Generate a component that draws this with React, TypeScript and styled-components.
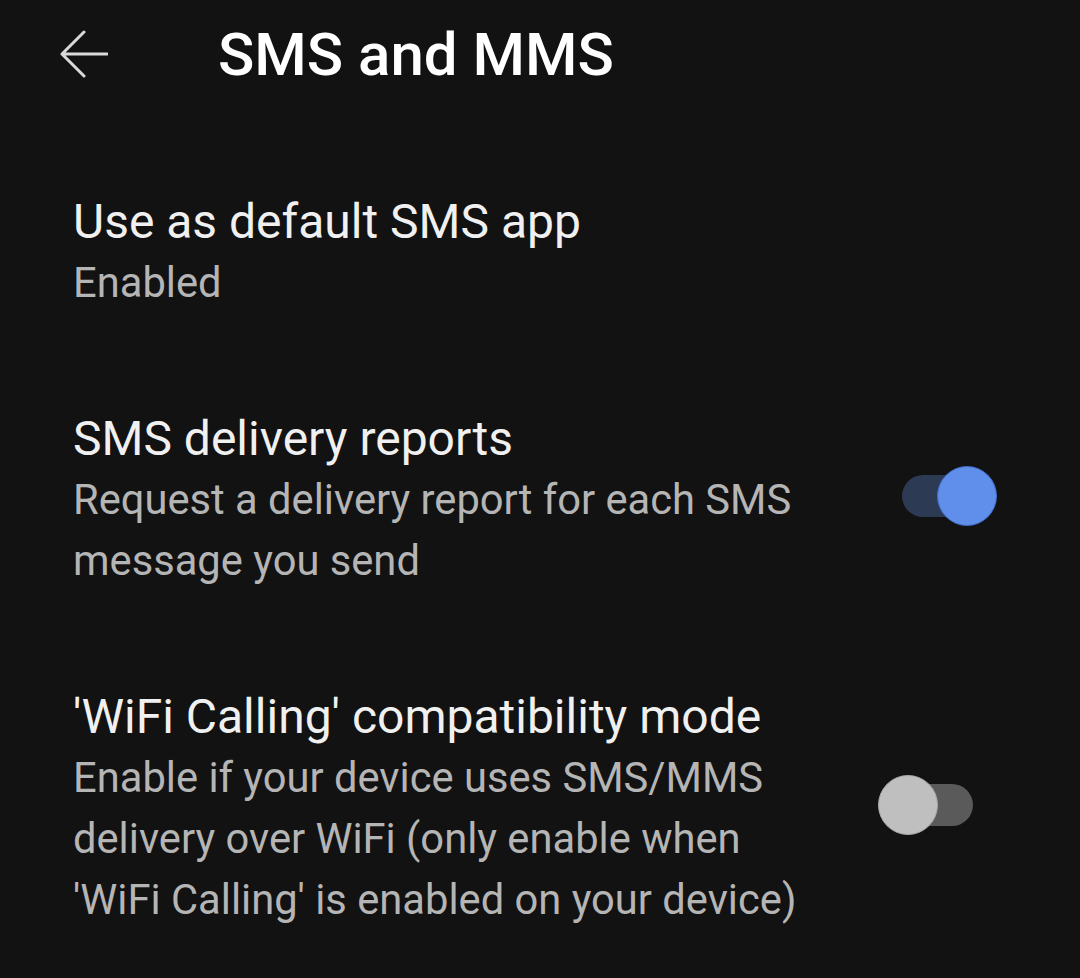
import styled, { createGlobalStyle } from "styled-components";

const GlobalStyle = createGlobalStyle`
  html, body {
    margin: 0;
    padding: 0;
    background: #121212;
  }
  body {
    font-family: Roboto, "Liberation Sans", sans-serif;
    -webkit-font-smoothing: antialiased;
  }
`;

interface Setting {
  title: string;
  summary: string;
  toggle?: boolean;
}

const settings: Setting[] = [
  { title: "Use as default SMS app", summary: "Enabled" },
  {
    title: "SMS delivery reports",
    summary: "Request a delivery report for each SMS message you send",
    toggle: true,
  },
  {
    title: "'WiFi Calling' compatibility mode",
    summary:
      "Enable if your device uses SMS/MMS delivery over WiFi (only enable when 'WiFi Calling' is enabled on your device)",
    toggle: false,
  },
];

const BackArrow = () => (
  <svg width="50" height="50" viewBox="0 0 50 50" fill="none">
    <path
      d="M49 25H4M26 3L4 25L26 47"
      stroke="#d9d9d9"
      strokeWidth="3"
      strokeLinecap="round"
      strokeLinejoin="round"
    />
  </svg>
);

const App = () => {
  return (
    <>
      <GlobalStyle />
      <Screen>
        <Toolbar>
          <BackButton aria-label="Back">
            <BackArrow />
          </BackButton>
          <Title>SMS and MMS</Title>
        </Toolbar>
        <List>
          {settings.map((s) => (
            <Row key={s.title}>
              <Text>
                <ItemTitle>{s.title}</ItemTitle>
                <Summary>{s.summary}</Summary>
              </Text>
              {s.toggle !== undefined && (
                <Switch $on={s.toggle}>
                  <Track $on={s.toggle} />
                  <Thumb $on={s.toggle} />
                </Switch>
              )}
            </Row>
          ))}
        </List>
      </Screen>
    </>
  );
};

export default App;

const Screen = styled.div`
  width: 1080px;
  min-height: 978px;
  background: #121212;
  color: #f2f2f2;
`;

const Toolbar = styled.header`
  height: 110px;
  display: flex;
  align-items: center;
  padding-left: 58px;
`;

const BackButton = styled.div`
  width: 50px;
  height: 50px;
  display: flex;
  align-items: center;
  justify-content: center;
  margin-top: -2px;
`;

const Title = styled.h1`
  margin: 0 0 0 110px;
  font-size: 60px;
  font-weight: 500;
  color: #ffffff;
  line-height: 1;
`;

const List = styled.div`
  padding-top: 34px;
`;

const Row = styled.div`
  display: flex;
  align-items: center;
  padding: 48px 82px 48px 73px;
  gap: 40px;
`;

const Text = styled.div`
  flex: 1;
  display: flex;
  flex-direction: column;
`;

const ItemTitle = styled.div`
  font-size: 48px;
  line-height: 60px;
  color: #f0f0f0;
`;

const Summary = styled.div`
  font-size: 41.7px;
  line-height: 61px;
  color: #b5b5b5;
  max-width: 760px;
`;

const Switch = styled.div<{ $on: boolean }>`
  position: relative;
  width: 120px;
  height: 60px;
  flex-shrink: 0;
  margin-top: -8px;
`;

const Track = styled.div<{ $on: boolean }>`
  position: absolute;
  left: 24px;
  top: 9px;
  width: 71px;
  height: 42px;
  border-radius: 21px;
  background: ${(p) => (p.$on ? "#2c3a53" : "#5a5a5a")};
`;

const Thumb = styled.div<{ $on: boolean }>`
  position: absolute;
  top: 0;
  left: ${(p) => (p.$on ? "59px" : "0")};
  width: 60px;
  height: 60px;
  border-radius: 50%;
  box-sizing: border-box;
  background: ${(p) => (p.$on ? "#5f8eeb" : "#bfbfbf")};
  border: 1px solid ${(p) => (p.$on ? "#3f6bc4" : "#a8a8a8")};
`;
